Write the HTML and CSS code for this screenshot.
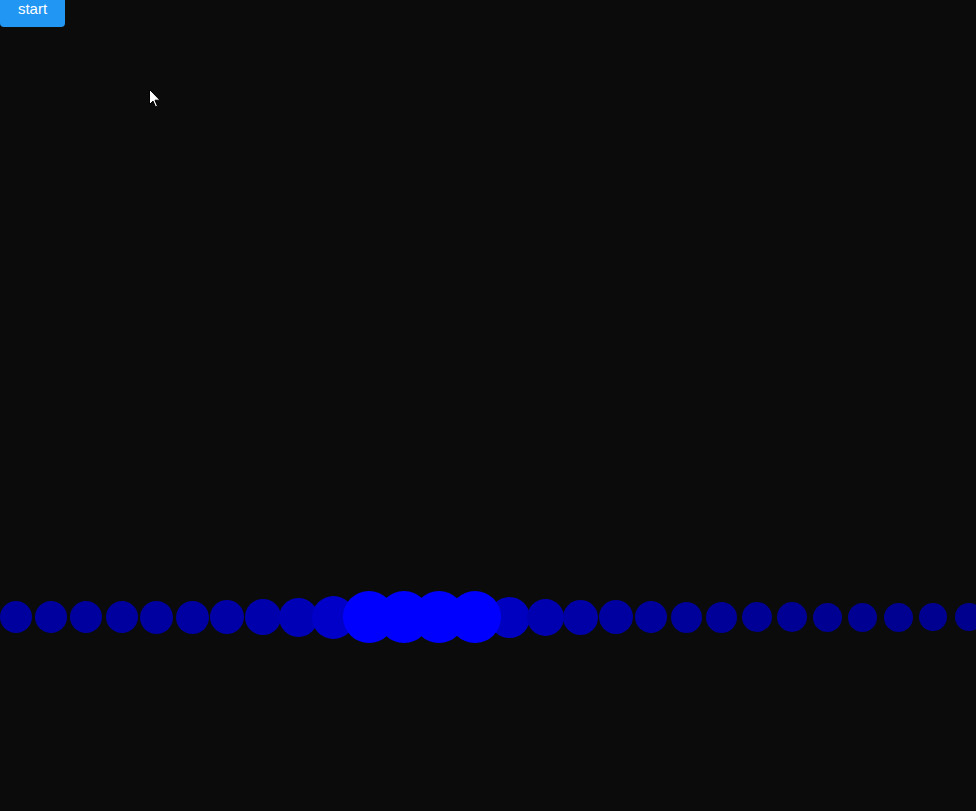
FILE: index.html
```html
<!DOCTYPE html>
<html lang="en">
<head>
<meta charset="utf-8">
<title>Circles</title>
<link rel="stylesheet" href="styles.css">
</head>
<body>
<div class="stage">
  <button class="start-btn" type="button">start</button>
  <div class="row">
    <div class="slot"><span class="dot" style="width:32px;height:32px;background:#00009e"></span></div>
    <div class="slot"><span class="dot" style="width:32px;height:32px;background:#00009e"></span></div>
    <div class="slot"><span class="dot" style="width:32px;height:32px;background:#00009e"></span></div>
    <div class="slot"><span class="dot" style="width:32px;height:32px;background:#00009f"></span></div>
    <div class="slot"><span class="dot" style="width:33px;height:33px;background:#0000a0"></span></div>
    <div class="slot"><span class="dot" style="width:33px;height:33px;background:#0000a2"></span></div>
    <div class="slot"><span class="dot" style="width:34px;height:34px;background:#0000a6"></span></div>
    <div class="slot"><span class="dot" style="width:36px;height:36px;background:#0000ac"></span></div>
    <div class="slot"><span class="dot" style="width:39px;height:39px;background:#0000b6"></span></div>
    <div class="slot"><span class="dot" style="width:43px;height:43px;background:#0000c8"></span></div>
    <div class="slot big"><span class="dot" style="width:52px;height:52px;background:#0000ff"></span></div>
    <div class="slot big"><span class="dot" style="width:52px;height:52px;background:#0000ff"></span></div>
    <div class="slot big"><span class="dot" style="width:52px;height:52px;background:#0000ff"></span></div>
    <div class="slot big"><span class="dot" style="width:52px;height:52px;background:#0000ff"></span></div>
    <div class="slot"><span class="dot" style="width:41px;height:41px;background:#0000c0"></span></div>
    <div class="slot"><span class="dot" style="width:37px;height:37px;background:#0000b0"></span></div>
    <div class="slot"><span class="dot" style="width:35px;height:35px;background:#0000a6"></span></div>
    <div class="slot"><span class="dot" style="width:34px;height:34px;background:#0000a0"></span></div>
    <div class="slot"><span class="dot" style="width:32px;height:32px;background:#00009c"></span></div>
    <div class="slot"><span class="dot" style="width:31px;height:31px;background:#00009a"></span></div>
    <div class="slot"><span class="dot" style="width:31px;height:31px;background:#000098"></span></div>
    <div class="slot"><span class="dot" style="width:30px;height:30px;background:#000096"></span></div>
    <div class="slot"><span class="dot" style="width:30px;height:30px;background:#000094"></span></div>
    <div class="slot"><span class="dot" style="width:29px;height:29px;background:#000093"></span></div>
    <div class="slot"><span class="dot" style="width:29px;height:29px;background:#000092"></span></div>
    <div class="slot"><span class="dot" style="width:29px;height:29px;background:#000091"></span></div>
    <div class="slot"><span class="dot" style="width:28px;height:28px;background:#000090"></span></div>
    <div class="slot"><span class="dot" style="width:28px;height:28px;background:#00008f"></span></div>
  </div>
  <svg class="cursor" width="12" height="19" viewBox="0 0 12 19" aria-hidden="true">
    <path d="M0.5 0.5 L0.5 15.5 L4 12 L6.5 18 L8.5 17.2 L6 11.2 L11 11.2 Z" fill="#ffffff" stroke="#000000" stroke-width="1" stroke-linejoin="round"/>
  </svg>
</div>
</body>
</html>
```

FILE: styles.css
```css
html, body {
  margin: 0;
  padding: 0;
  background: #0b0b0b;
  overflow: hidden;
}

.stage {
  position: relative;
  width: 976px;
  height: 811px;
  overflow: hidden;
  background: #0b0b0b;
}

.start-btn {
  display: block;
  margin: -9px 0 0 0;
  height: 36px;
  width: 65px;
  padding: 0;
  border: none;
  border-radius: 4px;
  background: #2196f3;
  color: #ffffff;
  font-family: "Liberation Sans", Arial, sans-serif;
  font-size: 15px;
  line-height: 36px;
  text-align: center;
  cursor: pointer;
}

.row {
  display: flex;
  align-items: center;
  height: 52px;
  margin-top: 564px;
  margin-left: -2px;
}

.slot {
  flex: 0 0 35.3px;
  width: 35.3px;
  height: 52px;
  display: flex;
  align-items: center;
  justify-content: center;
  position: relative;
  z-index: 1;
}

.slot.big {
  z-index: 2;
}

.dot {
  flex: 0 0 auto;
  display: block;
  border-radius: 50%;
  filter: blur(0.7px);
}

.cursor {
  position: absolute;
  left: 149px;
  top: 89px;
  z-index: 5;
}
```
